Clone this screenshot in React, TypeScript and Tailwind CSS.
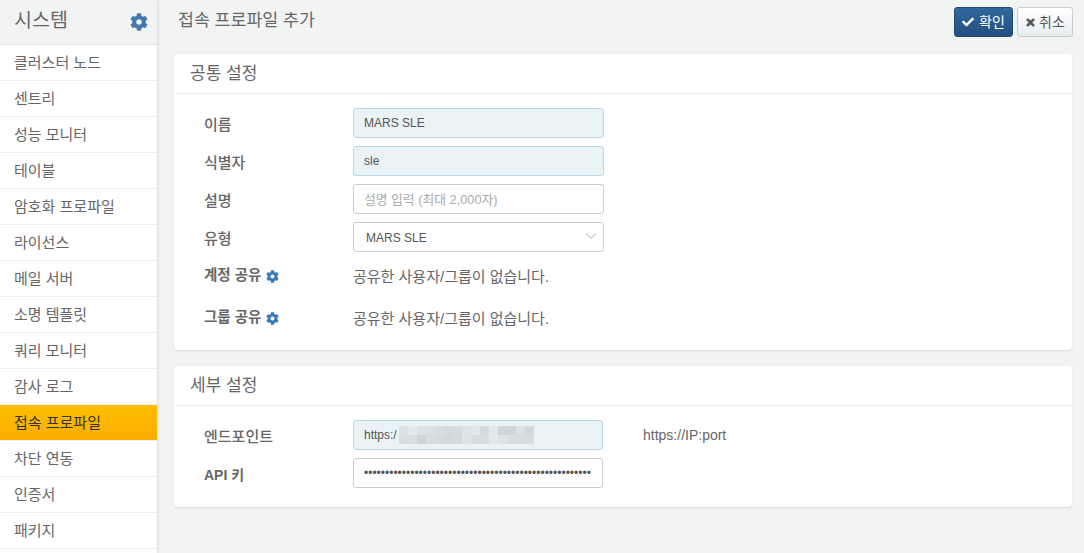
import { FaCheck, FaCog, FaTimes } from 'react-icons/fa'
import { ChevronDown } from 'lucide-react'

const MENU = [
  '클러스터 노드', '센트리', '성능 모니터', '테이블', '암호화 프로파일', '라이선스', '메일 서버',
  '소명 템플릿', '쿼리 모니터', '감사 로그', '접속 프로파일', '차단 연동', '인증서', '패키지',
]
const ACTIVE = '접속 프로파일'

// mosaic over the masked endpoint address
const BLUR = [
  '#d8e2e5', '#e2eaed', '#dae3e6', '#d8e2e5', '#d5dfe2', '#d1dbde', '#d3dde0', '#dce5e8',
  '#dfe8eb', '#d1dbdd', '#e0e9ec', '#cdd7d9', '#cdd7d9', '#d9e2e4', '#d0dadc',
  '#d5dfe1', '#d7e1e4', '#ccd6d7', '#d5dfe2', '#d2dcdf', '#cfd9dc', '#d2dcdf', '#dbe5ea',
  '#d5dfe2', '#d5dfe2', '#e0e9ec', '#dbe5e8', '#d5dfe1', '#d5dfe1', '#d5dfe2',
]

function Row({ label, bold, children }: { label: React.ReactNode; bold?: boolean; children: React.ReactNode }) {
  return (
    <div className="flex items-center">
      <div className={`w-[149px] text-[#666] pt-[4px] ${bold ? 'font-bold text-[14px]' : 'font-medium text-[15px]'}`}>{label}</div>
      {children}
    </div>
  )
}

function ShareLabel({ text }: { text: string }) {
  return (
    <span className="flex items-center gap-[5px] font-bold text-[14.5px] -mt-[6px]">
      {text}
      <FaCog className="w-[13px] h-[13px] text-[#337ab7]" />
    </span>
  )
}

const inputCls = 'h-[30px] border rounded-[3px] px-[10px] text-[#555] outline-none'

export default function App() {
  return (
    <div className="flex h-[553px] w-[1084px] overflow-hidden bg-[#f2f4f4] text-[#666] font-['Liberation_Sans','Noto_Sans_CJK_KR',sans-serif]">
      <aside className="w-[158px] shrink-0 bg-white border-r border-[#e0e0e0] shadow-[1px_0_3px_rgba(0,0,0,0.05)]">
        <div className="h-[45px] bg-[#f2f4f4] border-b border-[#e3e3e3] flex justify-between pl-[14px] pr-[9px]">
          <span className="text-[19.5px] leading-[41px]">시스템</span>
          <FaCog className="w-[18px] h-[18px] mt-[13px] text-[#4478ae]" />
        </div>
        {MENU.map((m) => (
          <div
            key={m}
            className={`h-[36px] pl-[14px] text-[15px] leading-[36px] border-b-[1px] border-[#eeeeee] ${
              m === ACTIVE ? 'bg-gradient-to-b from-[#fdbf00] to-[#faad00] text-[#333]' : ''
            }`}
          >
            {m}
          </div>
        ))}
      </aside>

      <main className="flex-1 px-[12px] pl-[16px]">
        <div className="h-[54px] flex justify-between pt-[7px] -mr-[1px]">
          <h1 className="text-[17.3px] leading-[26px] pl-[4px]">접속 프로파일 추가</h1>
          <div className="flex gap-[4px] h-[30px]">
            <button className="w-[59px] rounded-[3px] border border-[#1f4a78] bg-gradient-to-b from-[#33679d] to-[#234f7e] text-white text-[14px] flex items-center justify-center gap-[5px]">
              <FaCheck className="w-[12px] h-[12px]" />확인
            </button>
            <button className="w-[56px] rounded-[3px] border border-[#cccccc] bg-gradient-to-b from-white to-[#e9edf0] text-[#555] text-[14px] flex items-center justify-center gap-[3px]">
              <FaTimes className="w-[11px] h-[11px]" stroke="currentColor" strokeWidth={40} />취소
            </button>
          </div>
        </div>

        <section className="bg-white rounded-[4px] shadow-[0_1px_2px_rgba(0,0,0,0.1)] h-[296px]">
          <h2 className="h-[40px] border-b border-[#eeeeee] pl-[16px] text-[17px] leading-[40px]">공통 설정</h2>
          <div className="pl-[30px] pt-[14px] flex flex-col gap-[8px]">
            <Row label="이름">
              <input readOnly value="MARS SLE" className={`${inputCls} text-[12px] w-[251px] bg-[#e9f3f6] border-[#b8d9e8]`} />
            </Row>
            <Row label="식별자">
              <input readOnly value="sle" className={`${inputCls} text-[12px] w-[251px] bg-[#e9f3f6] border-[#b8d9e8]`} />
            </Row>
            <Row label="설명">
              <input placeholder="설명 입력 (최대 2,000자)" className={`${inputCls} text-[12.8px] w-[251px] bg-white border-[#cccccc] placeholder:text-[#aaaaaa]`} />
            </Row>
            <Row label="유형">
              <div className={`${inputCls} text-[12px] w-[251px] bg-white border-[#cccccc] flex items-center justify-between pl-[12px] pr-[2px]`}>
                <span className="pt-[2px]">MARS SLE</span>
                <ChevronDown className="w-[20px] h-[20px] text-[#aaaaaa] -mt-[2px]" strokeWidth={1.2} />
              </div>
            </Row>
            <div className="h-[42px] mt-[-8px] flex items-center pt-[8px]">
              <Row label={<ShareLabel text="계정 공유" />}>
                <span className="text-[15px] leading-[20px]">공유한 사용자/그룹이 없습니다.</span>
              </Row>
            </div>
            <div className="h-[42px] mt-[-8px] flex items-center pt-[8px]">
              <Row label={<ShareLabel text="그룹 공유" />}>
                <span className="text-[15px] leading-[20px]">공유한 사용자/그룹이 없습니다.</span>
              </Row>
            </div>
          </div>
        </section>

        <section className="bg-white rounded-[4px] shadow-[0_1px_2px_rgba(0,0,0,0.1)] h-[141px] mt-[16px]">
          <h2 className="h-[40px] border-b border-[#eeeeee] pl-[16px] text-[17px] leading-[40px]">세부 설정</h2>
          <div className="pl-[30px] pt-[14px] flex flex-col gap-[8px]">
            <Row label="엔드포인트">
              <div className={`${inputCls} text-[12px] w-[250px] bg-[#e9f3f6] border-[#b8d9e8] flex items-center relative`}>
                https:/
                <div className="absolute left-[45px] top-[5px] grid grid-cols-[repeat(15,9px)] auto-rows-[9px]">
                  {BLUR.map((c, i) => (
                    <div key={i} style={{ background: c }} />
                  ))}
                </div>
              </div>
              <span className="ml-[40px] text-[14px]">https://IP:port</span>
            </Row>
            <Row label="API 키" bold>
              <input
                readOnly
                type="password"
                value={'x'.repeat(54)}
                className={`${inputCls} text-[12px] w-[250px] bg-white border-[#cccccc]`}
              />
            </Row>
          </div>
        </section>
      </main>
    </div>
  )
}
